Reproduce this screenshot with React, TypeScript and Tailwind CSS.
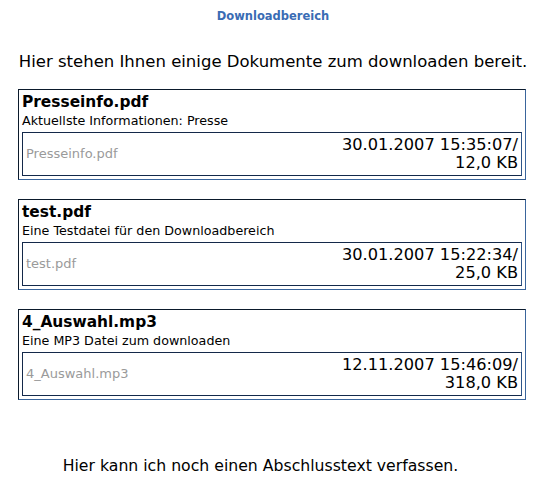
const files = [
  {
    name: 'Presseinfo.pdf',
    desc: 'Aktuellste Informationen: Presse',
    date: '30.01.2007 15:35:07/',
    size: '12,0 KB',
  },
  {
    name: 'test.pdf',
    desc: 'Eine Testdatei für den Downloadbereich',
    date: '30.01.2007 15:22:34/',
    size: '25,0 KB',
  },
  {
    name: '4_Auswahl.mp3',
    desc: 'Eine MP3 Datei zum downloaden',
    date: '12.11.2007 15:46:09/',
    size: '318,0 KB',
  },
];

export default function App() {
  return (
    <div className="min-h-[490px] bg-white text-black font-['DejaVu_Sans',Verdana,sans-serif]">
      {/* Kopfzeile */}
      <h1 className="pt-[8px] text-center text-[11.5px] font-bold leading-[16px] text-[#3a6cb4]">
        Downloadbereich
      </h1>

      <p className="mt-[28px] text-center text-[16.5px] leading-[20px]">
        Hier stehen Ihnen einige Dokumente zum downloaden bereit.
      </p>

      {/* Dateiliste */}
      <div className="mx-[18px] mt-[17px] flex w-[508px] flex-col gap-[19px]">
        {files.map((f) => (
          <div
            key={f.name}
            className="border border-t-[#0b1a2c] border-l-[#0b1a2c] border-b-[#3a659c] border-r-[#3a659c] px-[3px] pb-[3px]"
          >
            <div className="pt-[2px] text-[15.4px] font-bold leading-[20px]">{f.name}</div>
            <div className="pb-[3px] text-[12.7px] leading-[17px]">{f.desc}</div>
            <div className="flex h-[44px] items-center justify-between border border-[#14294a] border-r-[#2e5589] px-[3px]">
              <span className="text-[13px] text-[#9a9a9a]">{f.name}</span>
              <span className="text-right text-[16.2px] leading-[18px]">
                {f.date}
                <br />
                {f.size}
              </span>
            </div>
          </div>
        ))}
      </div>

      <p className="mt-[56px] pr-[25px] text-center text-[15.7px] leading-[20px]">
        Hier kann ich noch einen Abschlusstext verfassen.
      </p>
    </div>
  );
}
